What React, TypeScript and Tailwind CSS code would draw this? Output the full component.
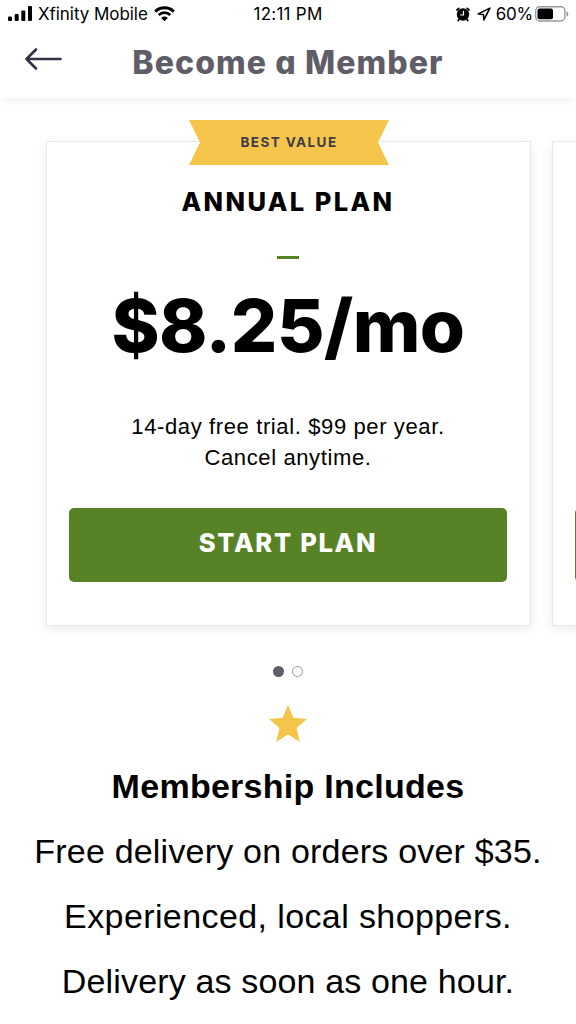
const display = "font-['Inter','Liberation_Sans',sans-serif] [font-feature-settings:'cv11','ss03']";

function StatusBar() {
  return (
    <div className="grid h-7 grid-cols-3 items-center pl-2 pr-[7px] font-['Inter','Liberation_Sans',sans-serif] text-[17px] leading-7">
      <div className="flex items-center whitespace-nowrap">
        <svg className="mr-[6px] h-4 w-6 shrink-0" viewBox="0 0 24 16">
          <rect x="0" y="10.5" width="4" height="4.5" rx="1" />
          <rect x="6.7" y="8" width="4" height="7" rx="1" />
          <rect x="13.3" y="4.5" width="4" height="10.5" rx="1" />
          <rect x="20" y="0" width="4" height="15" rx="1" />
        </svg>
        <span className="tracking-[-0.05px]">Xfinity Mobile</span>
        <svg className="ml-[6px] h-4 w-[21px] shrink-0" viewBox="0 0 21 16">
          <path d="M1.2 5.6a13.3 13.3 0 0 1 18.6 0" fill="none" stroke="#000" strokeWidth="2.9" />
          <path d="M4.7 9a8.3 8.3 0 0 1 11.6 0" fill="none" stroke="#000" strokeWidth="2.7" />
          <path d="M7.2 11.9a4.7 4.7 0 0 1 6.6 0L10.5 15.2Z" />
        </svg>
      </div>
      <span className="pr-px text-center tracking-[0.25px]">12:11 PM</span>
      <div className="flex items-center justify-end">
        <svg className="mr-[7px] h-[15px] w-[14px]" viewBox="0 0 14 15">
          <circle cx="7" cy="7.5" r="6.2" />
          <path d="M1 3 2.7 1.4M13 3 11.3 1.4M2.2 13.5l.6-.8M11.8 13.5l-.6-.8" stroke="#000" strokeWidth="1.8" strokeLinecap="round" />
          <path d="M7.5 4v4H4.2" fill="none" stroke="#fff" strokeWidth="1.2" />
        </svg>
        <svg className="mr-[5px] h-[14px] w-[14px]" viewBox="0 0 14 14">
          <path d="M12.9 1.1 1.2 6.9l5.2.6.5 5.4Z" fill="none" stroke="#000" strokeWidth="1.6" strokeLinejoin="round" />
        </svg>
        <span className="tracking-[-0.2px]">60%</span>
        <svg className="ml-[2px] h-4 w-[34px]" viewBox="0 0 34 16">
          <rect x=".7" y=".7" width="29.2" height="14.3" rx="4" fill="none" stroke="#999" strokeWidth="1.4" />
          <rect x="2.5" y="2.5" width="15.5" height="10.7" rx="2" />
          <path d="M31.5 5.2c2.5 1 2.5 4.4 0 5.4Z" fill="#999" />
        </svg>
      </div>
    </div>
  );
}

function Header() {
  return (
    <header className="h-[98px] shadow-[0_2px_8px_rgba(0,0,0,0.06)]">
      <StatusBar />
      <div className="grid h-[68px] grid-cols-[100px_1fr_100px] items-center">
        <button className="pb-[7px] pl-6" aria-label="Back">
          <svg className="h-6 w-10" viewBox="0 0 40 24" fill="none" stroke="#343046" strokeWidth="2.6" strokeLinecap="round" strokeLinejoin="round">
            <path d="M36.5 12H2.5M12 2.5 2.5 12 12 21.5" />
          </svg>
        </button>
        <h1 className={`${display} whitespace-nowrap pt-px text-center text-[32px] font-extrabold tracking-[1.1px] text-[#5f5d67]`}>Become a Member</h1>
      </div>
    </header>
  );
}

function PlanCard() {
  return (
    <section className="relative flex h-[485px] w-[485px] shrink-0 flex-col items-center border border-[#e8e8e8] bg-white pl-[22px] pr-[23px] shadow-[0_3px_10px_rgba(0,0,0,0.08)]">
      <div className={`${display} absolute -top-[22px] left-[142px] flex h-[45px] w-[200px] items-center justify-center bg-[#f5c54b] text-[13.5px] font-bold tracking-[1.4px] text-[#413b49] [clip-path:polygon(0_0,100%_0,94.5%_50%,100%_100%,0_100%,5.5%_50%)]`}>
        BEST VALUE
      </div>
      <h2 className={`${display} mt-[41px] whitespace-nowrap text-[25.5px] font-extrabold leading-[38px] tracking-[2.4px]`}>ANNUAL PLAN</h2>
      <div className="mt-[35px] h-[3px] w-[22px] bg-[#578226]" />
      <p className={`${display} mt-[27px] whitespace-nowrap text-[73px] font-extrabold leading-[80px] tracking-[-0.5px]`}>$8.25/mo</p>
      <p className="mt-[45px] whitespace-nowrap text-center text-[22px] leading-[31px] tracking-[0.62px]">
        14-day free trial. $99 per year.
        <br />
        Cancel anytime.
      </p>
      <button className={`${display} mt-[35px] h-[74px] w-full rounded-[5px] bg-[#578226] pb-[3px] text-[25.5px] font-extrabold tracking-[1.7px] text-white`}>
        START PLAN
      </button>
    </section>
  );
}

// tracking is tuned per line so each one keeps its width
const benefits = [
  { text: 'Free delivery on orders over $35.', tracking: 'tracking-[0.2px]' },
  { text: 'Experienced, local shoppers.', tracking: 'tracking-[0.4px]' },
  { text: 'Delivery as soon as one hour.', tracking: 'tracking-[0.15px]' },
];

export default function App() {
  return (
    <main className="h-[1024px] w-[576px] overflow-hidden bg-white font-['Liberation_Sans',sans-serif] text-black">
      <Header />
      <div className="flex gap-[21px] overflow-hidden pb-5 pl-[46px] pt-[43px]">
        <PlanCard />
        <section className="flex h-[485px] w-[485px] shrink-0 flex-col border border-[#e8e8e8] bg-white px-[22px] pt-[366px] shadow-[0_3px_10px_rgba(0,0,0,0.08)]">
          <div className="h-[74px] rounded-[5px] bg-[#578226]" />
        </section>
      </div>
      <div className="mt-5 flex justify-center gap-2">
        <span className="h-[11px] w-[11px] rounded-full bg-[#5f5d67]" />
        <span className="h-[11px] w-[11px] rounded-full border border-[#96949c]" />
      </div>
      <svg className="mx-auto mt-7 h-[37px] w-[38px]" viewBox="0 0 38 37" fill="#f5c54b">
        <path d="m19 0 5.3 12.8L38 13.9 27.6 23l3.2 13.7L19 29.4 7.2 36.7 10.4 23 0 13.9l13.7-1.1Z" />
      </svg>
      <div className="flex flex-col items-center whitespace-nowrap">
        <h3 className="mt-[23px] text-[34px] font-bold leading-[42px] tracking-[0.27px]">Membership Includes</h3>
        {benefits.map((b) => (
          <p key={b.text} className={`mt-[23px] text-[34px] leading-[42px] ${b.tracking}`}>{b.text}</p>
        ))}
      </div>
    </main>
  );
}
